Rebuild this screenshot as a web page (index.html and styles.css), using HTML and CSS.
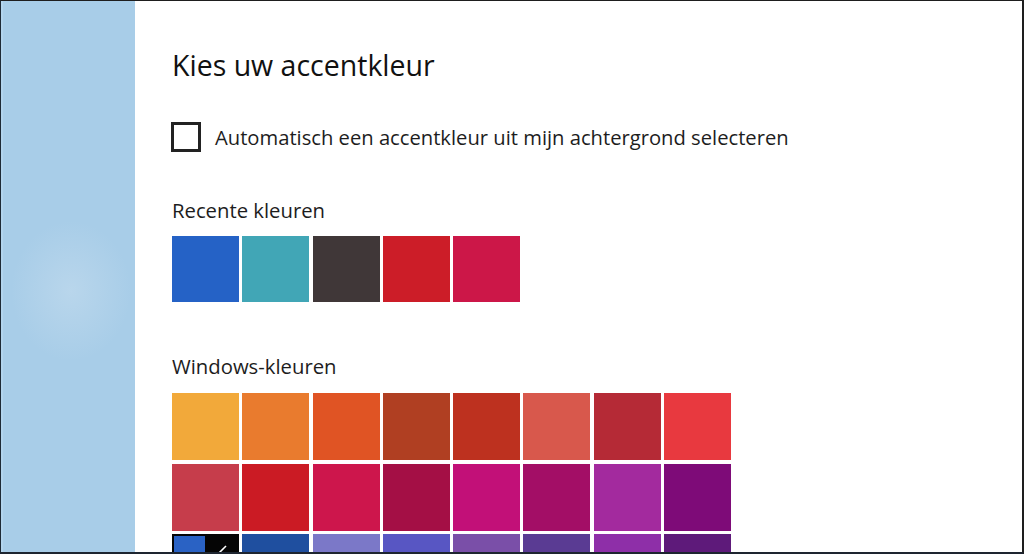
FILE: index.html
```html
<!DOCTYPE html>
<html lang="nl">
<head>
<meta charset="utf-8">
<title>Kies uw accentkleur</title>
<link rel="stylesheet" href="styles.css">
</head>
<body>
<div class="frame">
  <aside class="sidebar"></aside>
  <main class="content">
    <h1 class="title">Kies uw accentkleur</h1>
    <label class="check-row">
      <span class="checkbox"></span>
      <span class="check-label">Automatisch een accentkleur uit mijn achtergrond selecteren</span>
    </label>
    <h2 class="section">Recente kleuren</h2>
    <div class="swatches recent">
      <span class="sw" style="background:#2562c6"></span>
      <span class="sw" style="background:#41a6b6"></span>
      <span class="sw" style="background:#403738"></span>
      <span class="sw" style="background:#cc1d28"></span>
      <span class="sw" style="background:#cc1748"></span>
    </div>
    <h2 class="section section-win">Windows-kleuren</h2>
    <div class="swatches grid">
      <span class="sw" style="background:#f2a93a"></span>
      <span class="sw" style="background:#e97b2e"></span>
      <span class="sw" style="background:#e05424"></span>
      <span class="sw" style="background:#b03f22"></span>
      <span class="sw" style="background:#bd311f"></span>
      <span class="sw" style="background:#d8584c"></span>
      <span class="sw" style="background:#b52a36"></span>
      <span class="sw" style="background:#e8393f"></span>

      <span class="sw" style="background:#c63d4b"></span>
      <span class="sw" style="background:#cb1b24"></span>
      <span class="sw" style="background:#cd164c"></span>
      <span class="sw" style="background:#a40f45"></span>
      <span class="sw" style="background:#c21078"></span>
      <span class="sw" style="background:#a30e66"></span>
      <span class="sw" style="background:#a32a9e"></span>
      <span class="sw" style="background:#7e0b78"></span>

      <span class="sw selected"><span class="sel-inner"></span><svg class="sel-check" viewBox="0 0 12 12" width="12" height="12"><path d="M2 11 L10 3" stroke="#fff" stroke-width="1.6" fill="none"/></svg></span>
      <span class="sw" style="background:#1f4f9f"></span>
      <span class="sw" style="background:#7b78c8"></span>
      <span class="sw" style="background:#5856c3"></span>
      <span class="sw" style="background:#7a4fa8"></span>
      <span class="sw" style="background:#5a3b93"></span>
      <span class="sw" style="background:#8e2fa8"></span>
      <span class="sw" style="background:#5e1a7a"></span>
    </div>
  </main>
</div>
</body>
</html>
```

FILE: styles.css
```css
html, body {
  margin: 0;
  padding: 0;
  background: #ffffff;
}

.frame {
  box-sizing: border-box;
  width: 1024px;
  height: 554px;
  display: flex;
  overflow: hidden;
  border-top: 1px solid #1e1e1e;
  border-left: 1px solid #1e2a36;
  border-right: 2px solid #1e1e1e;
  border-bottom: 2px solid #1e2530;
  font-family: "Open Sans", "Noto Sans", "Liberation Sans", sans-serif;
  color: #1a1a1a;
}

.sidebar {
  flex: 0 0 134px;
  background:
    radial-gradient(ellipse 60px 70px at 68px 290px, rgba(196, 220, 238, 0.6), rgba(196, 220, 238, 0) 100%),
    #a8cde8;
  border-left: 2px solid #b3d5ee;
  box-sizing: border-box;
}

.content {
  flex: 1;
  padding: 0 0 0 37px;
  overflow: hidden;
}

.title {
  margin: 46px 0 0 0;
  font-size: 28.5px;
  line-height: 37px;
  font-weight: 400;
  color: #111;
}

.check-row {
  display: flex;
  align-items: center;
  gap: 14px;
  margin-top: 38px;
  margin-left: -1px;
}

.checkbox {
  box-sizing: border-box;
  width: 30px;
  height: 30px;
  border: 3px solid #222;
  flex: none;
}

.check-label {
  font-size: 20.2px;
  line-height: 30px;
  color: #1d1d1d;
}

.section {
  margin: 0;
  font-size: 20.3px;
  font-weight: 400;
  line-height: 24px;
  color: #1d1d1d;
}

.check-row + .section {
  margin-top: 46px;
}

.swatches {
  display: grid;
  grid-template-columns: repeat(8, 67px);
  grid-auto-rows: 67px;
  column-gap: 3.3px;
  row-gap: 3.6px;
}

.recent {
  margin-top: 14px;
  grid-auto-rows: 66px;
}

.section-win {
  margin-top: 52px;
}

.grid {
  margin-top: 15px;
}

.sw {
  display: block;
}

.selected {
  position: relative;
  background: #050505;
}

.sel-inner {
  position: absolute;
  left: 2px;
  top: 2px;
  width: 31px;
  height: 60px;
  background: #2a62c4;
}

.sel-check {
  position: absolute;
  left: 44px;
  top: 9px;
}
```
